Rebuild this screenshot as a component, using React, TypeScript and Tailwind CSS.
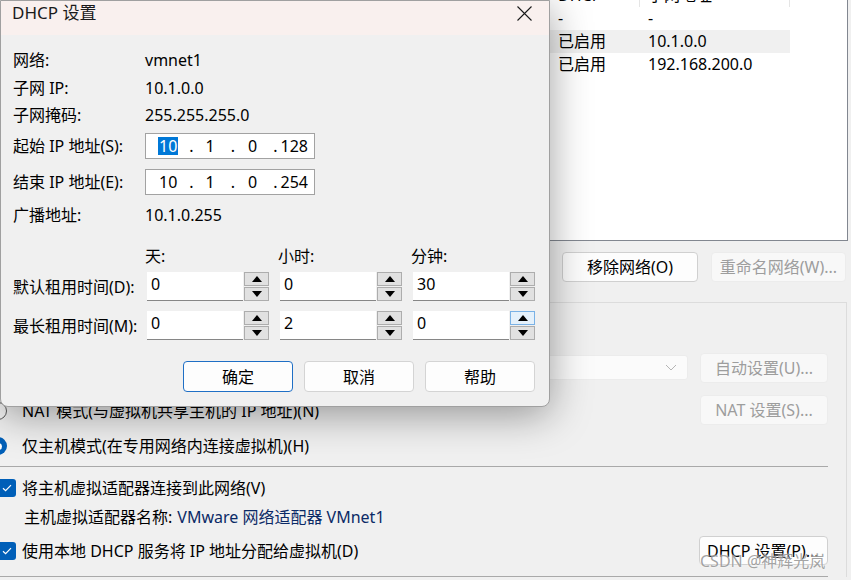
import React from "react";

const F = "font-[family-name:'Noto_Sans','Noto_Sans_CJK_SC',sans-serif]";

function Tri({ up }: { up?: boolean }) {
  return (
    <svg width="10" height="6" viewBox="0 0 10 6">
      {up ? <path d="M0 6 L5 0 L10 6 Z" fill="#000" /> : <path d="M0 0 L5 6 L10 0 Z" fill="#000" />}
    </svg>
  );
}

function SpinBtn({ up, hot }: { up?: boolean; hot?: boolean }) {
  return (
    <div
      className={
        "flex-1 flex items-center justify-center border " +
        (hot ? "bg-[#e5f1fb] border-[#7ab2e6]" : "bg-[#e1e1e1] border-[#adadad]")
      }
    >
      <Tri up={up} />
    </div>
  );
}

function Spin({ value, hot }: { value: string; hot?: boolean }) {
  return (
    <div className="flex w-[122px] h-[29px]">
      <div className="w-[96px] h-full bg-white border-b border-[#868686] pl-[4px] pt-[2px] text-[16px] leading-[20px] text-black">
        {value}
      </div>
      <div className="ml-[1px] w-[25px] h-full flex flex-col gap-[1px]">
        <SpinBtn up hot={hot} />
        <SpinBtn />
      </div>
    </div>
  );
}

function IpField({ last, hl }: { last: string; hl?: boolean }) {
  return (
    <div className="w-[170px] h-[26px] bg-white border border-[#a2a2a2] flex items-center pl-[12px] text-[16px] leading-[18px] text-black">
      <span className={hl ? "bg-[#0078d7] text-white px-[1px]" : "px-[1px]"}>10</span>
      <span className="ml-[11px]">.</span>
      <span className="ml-[12px]">1</span>
      <span className="ml-[16px]">.</span>
      <span className="ml-[13px]">0</span>
      <span className="ml-[16px]">.</span>
      <span className="ml-[3px]">{last}</span>
    </div>
  );
}

function DlgBtn({ label, primary }: { label: string; primary?: boolean }) {
  return (
    <div
      className={
        "w-[110px] h-[31px] rounded-[4px] bg-[#fdfdfd] flex items-center justify-center text-[16px] text-black border " +
        (primary ? "border-[#1f6fc5]" : "border-[#d4d4d4]")
      }
    >
      {label}
    </div>
  );
}

function BgBtn({ label, w, disabled }: { label: string; w: string; disabled?: boolean }) {
  return (
    <div
      className={
        w +
        " h-[30px] rounded-[4px] flex items-center justify-center text-[16px] border " +
        (disabled ? "bg-[#f8f8f8] border-[#ececec] text-[#9d9d9d]" : "bg-[#fdfdfd] border-[#d0d0d0] text-black")
      }
    >
      {label}
    </div>
  );
}

function Check() {
  return (
    <div className="w-[18px] h-[18px] rounded-[3px] bg-[#005fb8] flex items-center justify-center">
      <svg width="10" height="8" viewBox="0 0 10 8">
        <path d="M1 4.2 L3.6 6.6 L9 1.2" stroke="#fff" strokeWidth="1.2" fill="none" />
      </svg>
    </div>
  );
}

export default function App() {
  return (
    <div className={"relative w-[851px] h-[580px] overflow-hidden bg-[#f0f0f0] text-black " + F}>
      {/* background window */}
      <div className="-ml-[10px] w-[861px] flex flex-col pr-[3px]">
        {/* network table */}
        <div className="h-[241px] bg-white border-r border-b border-[#828790] flex flex-col overflow-hidden">
          <div className="-mt-[15px] h-[22px] flex text-[16px] leading-[20px] shrink-0">
            <div className="w-[560px] border-r border-[#e5e5e5]" />
            <div className="w-[90px] pl-[8px] border-r border-[#e5e5e5]">DHCP</div>
            <div className="w-[150px] pl-[8px] border-r border-[#e5e5e5]">子网地址</div>
            <div className="flex-1" />
          </div>
          {[
            { d: "-", s: "-", hl: false },
            { d: "已启用", s: "10.1.0.0", hl: true },
            { d: "已启用", s: "192.168.200.0", hl: false },
          ].map((r, i) => (
            <div key={i} className="h-[23px] flex text-[16px] leading-[23px] shrink-0">
              <div className={"w-[560px] " + (r.hl ? "bg-[#f0f0f0]" : "")} />
              <div className={"w-[90px] pl-[8px] " + (r.hl ? "bg-[#f0f0f0]" : "")}>{r.d}</div>
              <div className={"w-[150px] pl-[8px] " + (r.hl ? "bg-[#f0f0f0]" : "")}>{r.s}</div>
              <div className="flex-1" />
            </div>
          ))}
        </div>

        {/* buttons under table */}
        <div className="mt-[11px] flex justify-end gap-[13px] pr-[2px]">
          <BgBtn label="移除网络(O)" w="w-[136px]" />
          <BgBtn label="重命名网络(W)..." w="w-[135px]" disabled />
        </div>

        {/* VMnet info group */}
        <div className="mt-[20px] mr-[1px] border-t border-r border-[#dcdcdc] pr-[18px] flex flex-col">
          <div className="mt-[50px] h-[29px] flex items-center justify-end gap-[12px]">
            <div className="w-[400px] h-[25px] bg-[#fbfbfb] border border-[#ececec] rounded-[3px] flex items-center justify-end pr-[10px]">
              <svg width="12" height="7" viewBox="0 0 12 7">
                <path d="M1 1 L6 6 L11 1" stroke="#b5b5b5" strokeWidth="1" fill="none" />
              </svg>
            </div>
            <BgBtn label="自动设置(U)..." w="w-[128px]" disabled />
          </div>
          <div className="mt-[13px] h-[29px] flex items-center justify-between">
            <div className="flex items-center -ml-[1px] mt-[3px]">
              <div className="w-[18px] h-[18px] rounded-full border border-[#5a5a5a] bg-[#f6f6f6]" />
              <span className="ml-[15px] text-[16px] leading-[20px]">NAT 模式(与虚拟机共享主机的 IP 地址)(N)</span>
            </div>
            <BgBtn label="NAT 设置(S)..." w="w-[128px]" disabled />
          </div>
          <div className="mt-[10px] h-[24px] flex items-center -ml-[1px]">
            <div className="w-[18px] h-[18px] rounded-full bg-[#005fb8] flex items-center justify-center">
              <div className="w-[7px] h-[7px] rounded-full bg-white" />
            </div>
            <span className="ml-[15px] text-[16px] leading-[20px]">仅主机模式(在专用网络内连接虚拟机)(H)</span>
          </div>
          <div className="mt-[8px] h-px bg-[#a9a9a9]" />
          <div className="mt-[11px] h-[20px] flex items-center pl-[8px]">
            <Check />
            <span className="ml-[6px] text-[16px] leading-[20px]">将主机虚拟适配器连接到此网络(V)</span>
          </div>
          <div className="mt-[9px] h-[20px] flex items-center pl-[34px] text-[16px] leading-[20px]">
            <span>主机虚拟适配器名称: </span>
            <span className="ml-[5px] text-[#0b2a66]">VMware 网络适配器 VMnet1</span>
          </div>
          <div className="mt-[9px] h-[29px] flex items-center justify-between">
            <div className="flex items-center pl-[8px]">
              <Check />
              <span className="ml-[6px] text-[16px] leading-[20px]">使用本地 DHCP 服务将 IP 地址分配给虚拟机(D)</span>
            </div>
            <div className="w-[129px] h-[29px] rounded-[4px] bg-[#fdfdfd] border border-[#d0d0d0] flex items-center pl-[7px] text-[16px]">
              DHCP 设置(P)...
            </div>
          </div>
          <div className="mt-[11px] h-px bg-[#a9a9a9]" />
        </div>
      </div>

      {/* watermark */}
      <div className="absolute left-[700px] top-[551px] text-[16px] leading-[20px] text-[#8c8c8c]/80 [text-shadow:0_0_2px_#fff]">
        CSDN @神辉光岚
      </div>

      {/* DHCP dialog */}
      <div className="absolute left-0 top-0 w-[550px] h-[407px] rounded-b-[8px] bg-[#f0f0f0] border border-[#a0a0a0] shadow-[0_8px_40px_rgba(0,0,0,0.38)] flex flex-col overflow-hidden">
        <div className="h-[34px] shrink-0 bg-[#f9f0ee] flex items-start justify-between pl-[11px] pr-[17px]">
          <span className="pt-[2px] text-[17px] leading-[20px] text-[#1a1a1a]">DHCP 设置</span>
          <svg className="mt-[5px]" width="15" height="15" viewBox="0 0 15 15">
            <path d="M0.5 0.5 L14.5 14.5 M14.5 0.5 L0.5 14.5" stroke="#1a1a1a" strokeWidth="1.1" />
          </svg>
        </div>
        <div className="flex flex-col pl-[12px] text-[16px]">
          <div className="mt-[11px] grid grid-cols-[132px_1fr] leading-[20px]">
            <div className="h-[28px] flex items-center">网络:</div>
            <div className="h-[28px] flex items-center">vmnet1</div>
            <div className="h-[27px] flex items-center">子网 IP:</div>
            <div className="h-[27px] flex items-center">10.1.0.0</div>
            <div className="h-[28px] flex items-center">子网掩码:</div>
            <div className="h-[28px] flex items-center">255.255.255.0</div>
          </div>
          <div className="mt-[4px] flex items-center">
            <div className="w-[132px] leading-[20px]">起始 IP 地址(S):</div>
            <IpField last="128" hl />
          </div>
          <div className="mt-[10px] flex items-center">
            <div className="w-[132px] leading-[20px]">结束 IP 地址(E):</div>
            <IpField last="254" />
          </div>
          <div className="mt-[7px] h-[26px] flex items-center leading-[20px]">
            <div className="w-[132px]">广播地址:</div>
            <div>10.1.0.255</div>
          </div>
          <div className="mt-[18px] h-[20px] flex items-center leading-[20px]">
            <div className="w-[132px]" />
            <div className="w-[133px]">天:</div>
            <div className="w-[133px]">小时:</div>
            <div>分钟:</div>
          </div>
          <div className="mt-[6px] flex items-center">
            <div className="w-[134px] leading-[20px] whitespace-nowrap">默认租用时间(D):</div>
            <div className="flex gap-[11px]">
              <Spin value="0" />
              <Spin value="0" />
              <Spin value="30" />
            </div>
          </div>
          <div className="mt-[10px] flex items-center">
            <div className="w-[134px] leading-[20px] whitespace-nowrap">最长租用时间(M):</div>
            <div className="flex gap-[11px]">
              <Spin value="0" />
              <Spin value="2" />
              <Spin value="0" hot />
            </div>
          </div>
          <div className="mt-[21px] flex justify-end gap-[11px] pr-[14px]">
            <DlgBtn label="确定" primary />
            <DlgBtn label="取消" />
            <DlgBtn label="帮助" />
          </div>
        </div>
      </div>
    </div>
  );
}
